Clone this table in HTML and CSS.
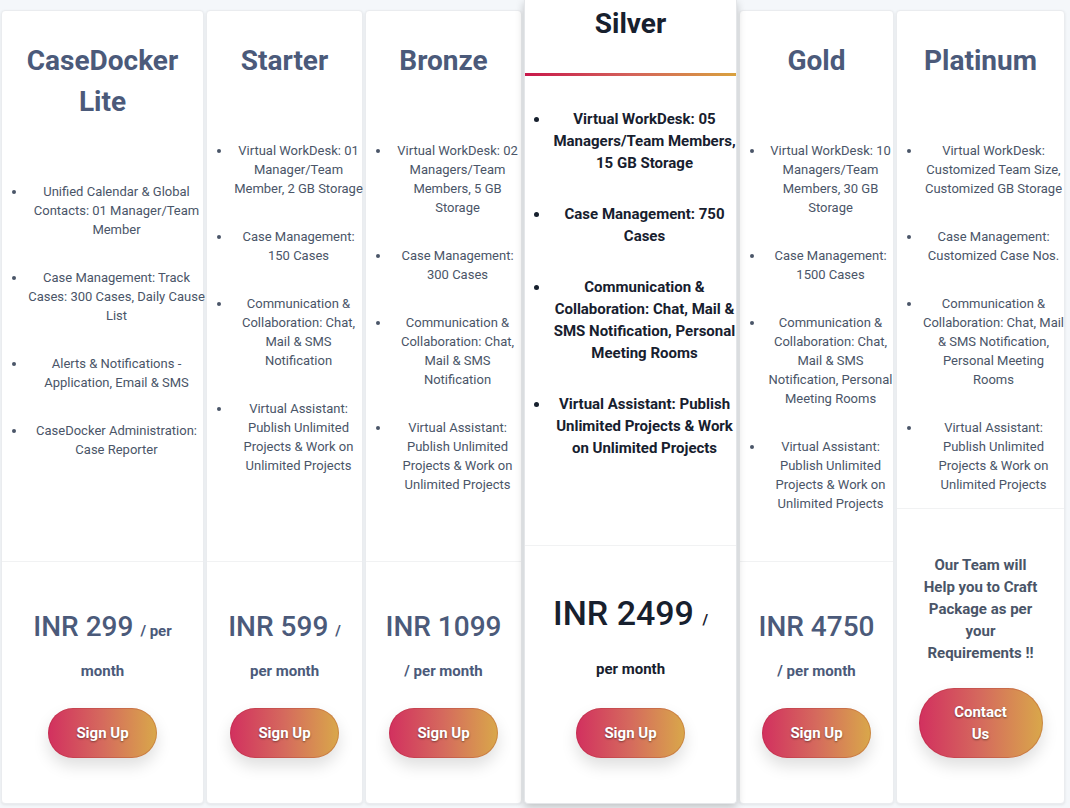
FILE: index.html
```html
<!DOCTYPE html>
<html lang="en">
<head>
<meta charset="utf-8">
<title>Pricing</title>
<link rel="stylesheet" href="styles.css">
</head>
<body>
<section class="pricing">
  <article class="card">
    <header class="card-head"><h2 class="plan-name">CaseDocker Lite</h2></header>
    <ul class="features">
      <li>Unified Calendar &amp; Global Contacts: 01 Manager/Team Member</li>
      <li>Case Management: Track Cases: 300 Cases, Daily Cause List</li>
      <li>Alerts &amp; Notifications - Application, Email &amp; SMS</li>
      <li>CaseDocker Administration: Case Reporter</li>
    </ul>
    <footer class="card-foot">
      <h3 class="price">INR 299 <span class="period">/ per month</span></h3>
      <a class="btn" href="#">Sign Up</a>
    </footer>
  </article>

  <article class="card">
    <header class="card-head"><h2 class="plan-name">Starter</h2></header>
    <ul class="features">
      <li>Virtual WorkDesk: 01 Manager/Team Member, 2 GB Storage</li>
      <li>Case Management: 150 Cases</li>
      <li>Communication &amp; Collaboration: Chat, Mail &amp; SMS Notification</li>
      <li>Virtual Assistant: Publish Unlimited Projects &amp; Work on Unlimited Projects</li>
    </ul>
    <footer class="card-foot">
      <h3 class="price">INR 599 <span class="period">/ per month</span></h3>
      <a class="btn" href="#">Sign Up</a>
    </footer>
  </article>

  <article class="card">
    <header class="card-head"><h2 class="plan-name">Bronze</h2></header>
    <ul class="features">
      <li>Virtual WorkDesk: 02 Managers/Team Members, 5 GB Storage</li>
      <li>Case Management: 300 Cases</li>
      <li>Communication &amp; Collaboration: Chat, Mail &amp; SMS Notification</li>
      <li>Virtual Assistant: Publish Unlimited Projects &amp; Work on Unlimited Projects</li>
    </ul>
    <footer class="card-foot">
      <h3 class="price">INR 1099 <span class="period">/ per month</span></h3>
      <a class="btn" href="#">Sign Up</a>
    </footer>
  </article>

  <article class="card featured">
    <header class="card-head"><h2 class="plan-name">Silver</h2></header>
    <ul class="features">
      <li>Virtual WorkDesk: 05 Managers/Team Members, 15 GB Storage</li>
      <li>Case Management: 750 Cases</li>
      <li>Communication &amp; Collaboration: Chat, Mail &amp; SMS Notification, Personal Meeting Rooms</li>
      <li>Virtual Assistant: Publish Unlimited Projects &amp; Work on Unlimited Projects</li>
    </ul>
    <footer class="card-foot">
      <h3 class="price">INR 2499 <span class="period">/ per month</span></h3>
      <a class="btn" href="#">Sign Up</a>
    </footer>
  </article>

  <article class="card">
    <header class="card-head"><h2 class="plan-name">Gold</h2></header>
    <ul class="features">
      <li>Virtual WorkDesk: 10 Managers/Team Members, 30 GB Storage</li>
      <li>Case Management: 1500 Cases</li>
      <li>Communication &amp; Collaboration: Chat, Mail &amp; SMS Notification, Personal Meeting Rooms</li>
      <li>Virtual Assistant: Publish Unlimited Projects &amp; Work on Unlimited Projects</li>
    </ul>
    <footer class="card-foot">
      <h3 class="price">INR 4750 <span class="period">/ per month</span></h3>
      <a class="btn" href="#">Sign Up</a>
    </footer>
  </article>

  <article class="card custom">
    <header class="card-head"><h2 class="plan-name">Platinum</h2></header>
    <ul class="features">
      <li>Virtual WorkDesk: Customized Team Size, Customized GB Storage</li>
      <li>Case Management: Customized Case Nos.</li>
      <li>Communication &amp; Collaboration: Chat, Mail &amp; SMS Notification, Personal Meeting Rooms</li>
      <li>Virtual Assistant: Publish Unlimited Projects &amp; Work on Unlimited Projects</li>
    </ul>
    <footer class="card-foot">
      <p class="note">Our Team will Help you to Craft Package as per your Requirements !!</p>
      <a class="btn btn-contact" href="#">Contact Us</a>
    </footer>
  </article>
</section>
</body>
</html>
```

FILE: styles.css
```css
* {
  box-sizing: border-box;
}

html, body {
  margin: 0;
  padding: 0;
}

body {
  background: #f4f7fa;
  font-family: Roboto, "Liberation Sans", Arial, sans-serif;
  color: #4a5568;
  width: 1070px;
  height: 808px;
  overflow: hidden;
}

.pricing {
  display: grid;
  grid-template-columns: 203px 157px 157px 213px 155px 169px;
  column-gap: 2px;
  padding: 10px 0 0 1px;
  height: 804px;
  align-items: stretch;
}

.card {
  display: flex;
  flex-direction: column;
  background: #fff;
  border: 1px solid #eaecef;
  border-radius: 4px;
  box-shadow: 0 1px 3px rgba(0, 0, 0, 0.08);
}

.featured {
  margin-top: -10px;
  border-radius: 0 0 4px 4px;
  border-top: 0;
  border-color: #e4e6e9;
  box-shadow: 0 3px 8px rgba(0, 0, 0, 0.22);
  position: relative;
  z-index: 1;
}

.card-head {
  padding: 29px 10px 0;
  text-align: center;
}

.plan-name {
  margin: 0;
  font-size: 28px;
  line-height: 41px;
  font-weight: 700;
  color: #4b5a7a;
}

.featured .card-head {
  padding: 3px 10px 29px;
  border-bottom: 3px solid #c8174a;
  border-image: linear-gradient(90deg, #c8174a 0%, #d4625a 50%, #d9a23e 100%) 1;
}

.featured .plan-name {
  color: #17202e;
}

.features {
  margin: 60px -3px 0 0;
  padding: 0 0 0 25px;
  list-style: disc;
  text-align: center;
  font-size: 13px;
  line-height: 19px;
  color: #4a5568;
}

.custom .features {
  padding-right: 2px;
}

.features li {
  margin-bottom: 29px;
}

.features li:last-child {
  margin-bottom: 0;
}

.featured .features {
  margin-top: 32px;
  font-size: 15px;
  line-height: 22px;
  font-weight: 700;
  color: #17202e;
}

.card-foot {
  margin-top: auto;
  padding: 45px 18px 45px;
  border-top: 1px solid #f1f2f3;
  text-align: center;
}

.price {
  margin: 0 0 21px;
  font-size: 28px;
  line-height: 40px;
  font-weight: 500;
  color: #4b5a7a;
}

.period {
  font-size: 15px;
  line-height: 1;
  font-weight: 700;
}

.featured .card-foot {
  padding-top: 43px;
}

.featured .price {
  font-size: 34px;
  line-height: 49px;
  margin-bottom: 21px;
  color: #17202e;
}

.note {
  margin: 0 6px 24px;
  font-size: 15px;
  line-height: 22px;
  font-weight: 700;
  color: #4a5568;
}

.btn {
  display: inline-block;
  width: 109px;
  height: 50px;
  border-radius: 25px;
  background: linear-gradient(90deg, #d2305f 0%, #d56a5d 50%, #d9a84a 100%);
  box-shadow: 0 8px 16px rgba(0, 0, 0, 0.13), inset 0 0 0 1px rgba(160, 40, 40, 0.25);
  color: #fff;
  font-size: 15px;
  font-weight: 700;
  line-height: 50px;
  text-decoration: none;
  text-shadow: 0 1px 2px rgba(0, 0, 0, 0.45);
}

.btn-contact {
  width: 124px;
  height: 70px;
  border-radius: 35px;
  padding: 13px 30px;
  line-height: 22px;
}
```
